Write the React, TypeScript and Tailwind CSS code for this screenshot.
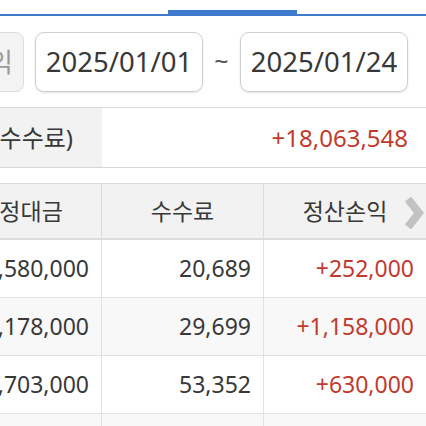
import React from 'react';

const rows = [
    { amount: '1,580,000', fee: '20,689', pnl: '+252,000' },
    { amount: '2,178,000', fee: '29,699', pnl: '+1,158,000' },
    { amount: '3,703,000', fee: '53,352', pnl: '+630,000' },
    { amount: '', fee: '', pnl: '' },
];

function App() {
    return (
        <div
            className="w-[426px] h-[426px] overflow-hidden bg-white text-[#383838]"
            style={{ fontFamily: '"Noto Sans", "Noto Sans CJK KR", sans-serif' }}
        >
            {/* tab underline */}
            <div className="h-[16px] flex items-end border-b-2 border-[#3f7bcc]">
                <div className="ml-[168px] w-[129px] h-[4px] bg-[#3f7bcc]" />
            </div>

            {/* date range */}
            <div className="flex items-center pt-[16px] pb-[15px] border-b border-[#dcdcdc]">
                <div className="ml-[-56px] w-[80px] h-[60px] rounded-[8px] border border-[#dcdcdc] bg-[#f3f3f3] flex items-center justify-end pr-[10px] text-[26px] text-[#999]">
                    손익
                </div>
                <div className="ml-[11px] w-[168px] h-[60px] rounded-[9px] border border-[#cfcfcf] shadow-[0_1px_2px_rgba(0,0,0,0.12)] flex items-center justify-center text-[27.5px]">
                    2025/01/01
                </div>
                <div className="w-[37px] text-center text-[25px] text-[#555] leading-none pb-[4px]">~</div>
                <div className="w-[168px] h-[60px] rounded-[9px] border border-[#cfcfcf] shadow-[0_1px_2px_rgba(0,0,0,0.12)] flex items-center justify-center text-[27.5px]">
                    2025/01/24
                </div>
            </div>

            {/* total */}
            <div className="flex h-[60px] border-b border-[#d6d6d6]">
                <div className="ml-[-100px] w-[202px] bg-[#f2f2f2] flex items-center justify-end pr-[29px] text-[24px]">
                    (수수료)
                </div>
                <div className="flex-1 flex items-center justify-end pr-[18px] text-[24px] text-[#c13a2e]">
                    +18,063,548
                </div>
            </div>

            {/* table */}
            <div className="relative mt-[15px]">
                <div className="ml-[-60px] w-[486px]">
                    <div className="grid grid-cols-3 h-[57px] bg-[#f2f2f2] border-t border-b-2 border-[#dcdcdc] text-[23px]">
                        <div className="flex items-center justify-center border-r border-[#dcdcdc]">약정대금</div>
                        <div className="flex items-center justify-center border-r border-[#dcdcdc]">수수료</div>
                        <div className="flex items-center justify-center">정산손익</div>
                    </div>
                    {rows.map((r, i) => (
                        <div
                            key={i}
                            className={`grid grid-cols-3 h-[58px] border-b border-[#e2e2e2] text-[23px] ${i % 2 === 1 ? 'bg-[#f8f8f8]' : 'bg-white'}`}
                        >
                            <div className="flex items-center justify-end pr-[12px] border-r border-[#e2e2e2]">{r.amount}</div>
                            <div className="flex items-center justify-end pr-[12px] border-r border-[#e2e2e2]">{r.fee}</div>
                            <div className="flex items-center justify-end pr-[12px] text-[#c13a2e]">{r.pnl}</div>
                        </div>
                    ))}
                </div>
                <svg className="absolute left-[404px] top-[14px]" width="20" height="32" viewBox="0 0 20 32">
                    <polyline points="4,2 15,16 4,30" fill="none" stroke="#c2c2c2" strokeWidth="8" strokeLinejoin="miter" />
                </svg>
            </div>
        </div>
    );
}

export default App;
